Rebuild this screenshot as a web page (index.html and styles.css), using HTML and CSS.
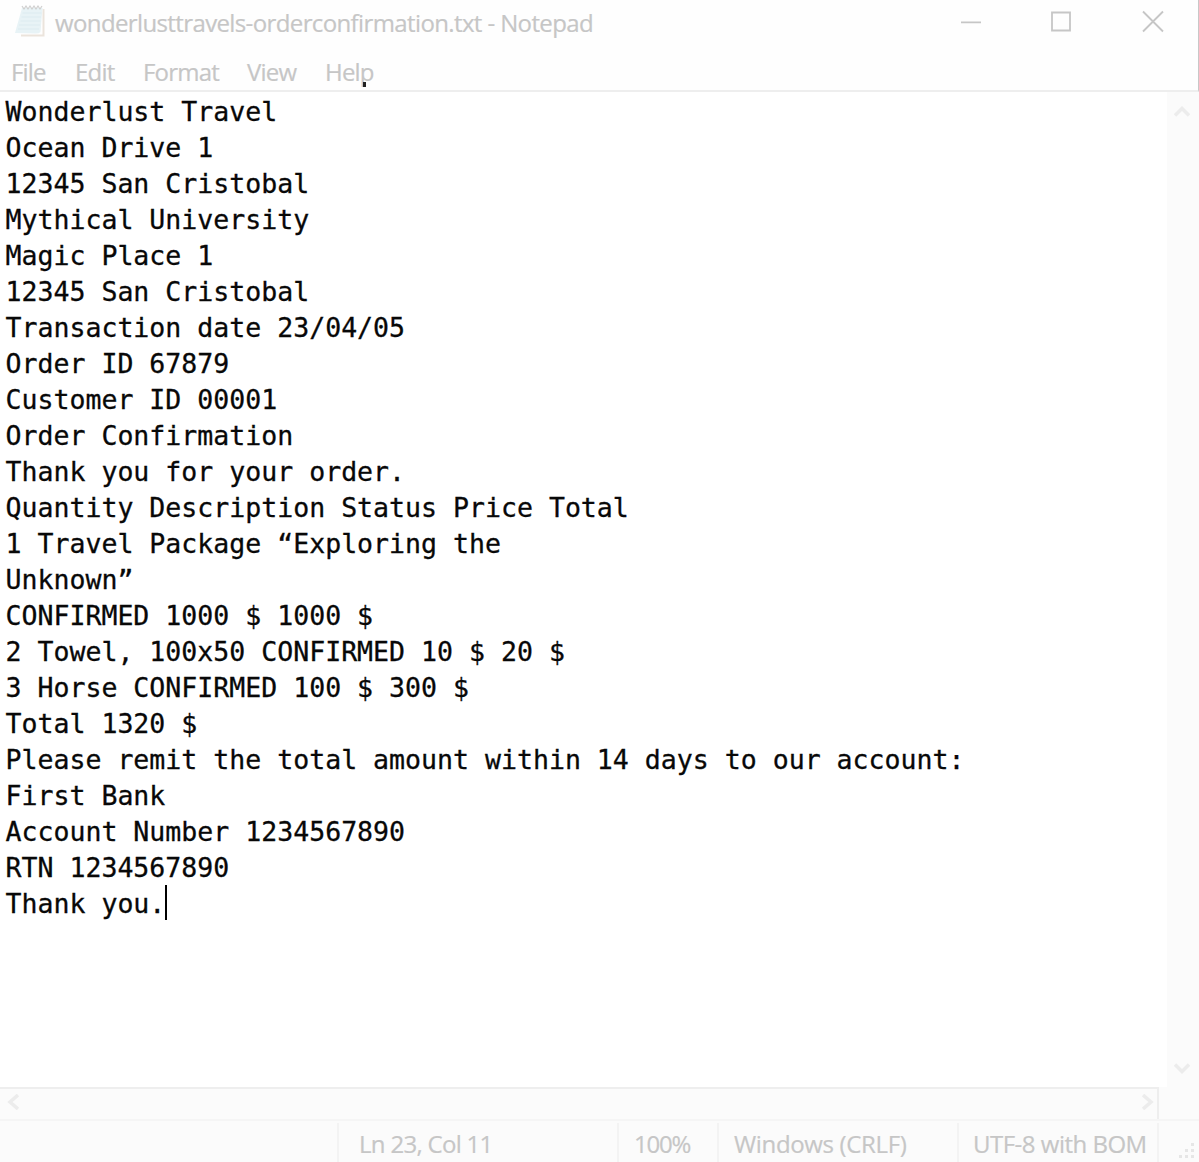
FILE: index.html
```
<!DOCTYPE html>
<html lang="en">
<head>
<meta charset="utf-8">
<title>wonderlusttravels-orderconfirmation.txt - Notepad</title>
<link rel="stylesheet" href="styles.css">
</head>
<body>
<div class="window">
  <header class="top">
    <div class="titlebar">
      <svg class="app-icon" width="34" height="36" viewBox="0 0 34 36">
        <path d="M7 33.500h22.500V7" fill="none" stroke="#ebe4dc" stroke-width="2"/>
        <path d="M8 6 28.500 6 26.500 30Q25 31.500 22 31.500L1 31Z" fill="#e8f3f6"/>
        <path d="M8.500 11h19M7.500 15h19.500M6.500 19h20M5 23h21M4 27h21" stroke="#dcebf0" stroke-width="1"/>
        <path d="M8 4l2 3 2-3 2 3 2-3 2 3 2-3 2 3 2-3 2 3 2-3" fill="none" stroke="#cfcfcf" stroke-width="1.200"/>
      </svg>
      <span class="title">wonderlusttravels-orderconfirmation.txt - Notepad</span>
      <svg class="controls" width="204" height="24" viewBox="0 0 204 24" fill="none" stroke="#c6c6c6" stroke-width="1.800">
        <path d="M1 12.300h20M92 2.500h18v18H92zM183 1.500l20 20M203 1.500l-20 20"/>
      </svg>
    </div>
    <nav class="menu">
      <span class="m-file">File</span><span class="m-edit">Edit</span><span class="m-format">Format</span><span class="m-view">View</span><span class="m-help">Help</span>
    </nav>
    <i class="pointer"></i>
  </header>
  <main class="middle">
    <pre class="editor">Wonderlust Travel
Ocean Drive 1
12345 San Cristobal
Mythical University
Magic Place 1
12345 San Cristobal
Transaction date 23/04/05
Order ID 67879
Customer ID 00001
Order Confirmation
Thank you for your order.
Quantity Description Status Price Total
1 Travel Package “Exploring the
Unknown”
CONFIRMED 1000 $ 1000 $
2 Towel, 100x50 CONFIRMED 10 $ 20 $
3 Horse CONFIRMED 100 $ 300 $
Total 1320 $
Please remit the total amount within 14 days to our account:
First Bank
Account Number 1234567890
RTN 1234567890
Thank you.<i class="caret"></i></pre>
    <div class="vscroll">
      <svg width="16" height="12" viewBox="0 0 16 12"><path d="M1 10.500 8 3.500l7 7" fill="none" stroke="#ececec" stroke-width="3.500"/></svg>
      <svg width="16" height="12" viewBox="0 0 16 12"><path d="M1 1.500 8 8.500l7-7" fill="none" stroke="#ececec" stroke-width="3.500"/></svg>
    </div>
  </main>
  <div class="hscroll">
    <div class="track">
      <svg width="12" height="16" viewBox="0 0 12 16"><path d="M11 1 3 8l8 7" fill="none" stroke="#ececec" stroke-width="3.500"/></svg>
      <svg width="12" height="16" viewBox="0 0 12 16"><path d="M1 1 9 8l-8 7" fill="none" stroke="#ececec" stroke-width="3.500"/></svg>
    </div>
  </div>
  <footer class="status">
    <div class="cell blank"></div>
    <div class="cell position"><span>Ln 23, Col 11</span></div>
    <div class="cell zoom"><span>100%</span></div>
    <div class="cell ending"><span>Windows (CRLF)</span></div>
    <div class="cell encoding"><span>UTF-8 with BOM</span></div>
    <svg class="grip" width="18" height="18" viewBox="0 0 18 18" fill="#e6e6e6"><path d="M13 1h3v3h-3zM7 7h3v3H7zM13 7h3v3h-3zM1 13h3v3H1zM7 13h3v3H7zM13 13h3v3h-3z"/></svg>
  </footer>
</div>
</body>
</html>
```
FILE: styles.css
```
* { box-sizing: border-box; }
body { margin: 0; background: #fefefe; }
.window {
  width: 1199px;
  height: 1162px;
  display: flex;
  flex-direction: column;
  overflow: hidden;
  font-family: "Open Sans", "Noto Sans", sans-serif;
  font-size: 24px;
  color: #c6c6c6;
  -webkit-text-stroke: 0.2px;
  white-space: nowrap;
}
.top {
  position: relative;
  height: 92px;
  border-right: 1px solid #c8c8c8;
  border-bottom: 2px solid #eee;
}
.titlebar { display: flex; height: 46px; align-items: flex-start; padding: 2px 34px 0 14px; }
.title { line-height: 42px; margin-left: 7px; letter-spacing: -0.62px; }
.controls { margin: 8px 0 0 auto; }
.menu { display: flex; line-height: 44px; height: 44px; padding: 4px 0 0 11px; }
.menu span { letter-spacing: -0.8px; }
.m-file { width: 64px; }
.m-edit { width: 68px; }
.m-format { width: 104px; }
.m-view { width: 78px; }
.pointer { position: absolute; left: 363px; top: 82px; width: 3px; height: 5px; background: #222; }
.middle { display: flex; height: 995px; }
.editor {
  flex: 1;
  margin: 0;
  padding: 2px 0 0 5.5px;
  background: #fff;
  color: #080808;
  font: 26.55px/36px "DejaVu Sans Mono", monospace;
  -webkit-text-stroke: 0.3px;
}
.caret { display: inline-block; width: 2px; height: 35px; background: #000; vertical-align: 3px; margin: -10px 0; }
.vscroll {
  width: 32px;
  display: flex;
  flex-direction: column;
  justify-content: space-between;
  padding: 13px 0 12px 7px;
  background: #fbfbfb;
}
.hscroll { height: 34px; background: #fbfbfb; border-bottom: 2px solid #f5f5f5; }
.track {
  width: 1159px;
  height: 32px;
  display: flex;
  justify-content: space-between;
  padding: 5px 3px 0 7px;
  border-top: 2px solid #eee;
  border-right: 2px solid #eee;
}
.status { display: flex; height: 41px; padding-top: 2px; background: #fbfbfb; line-height: 42px; }
.cell { border-right: 2px solid #f3f3f3; }
.blank { width: 339px; }
.position { width: 280px; padding-left: 20px; }
.zoom { width: 100px; padding-left: 15px; }
.ending { width: 240px; padding-left: 15px; }
.encoding { width: 200px; padding-left: 14px; }
.cell span { letter-spacing: -0.5px; }
.position span { letter-spacing: -0.7px; }
.zoom span { letter-spacing: -1.2px; }
.ending span { letter-spacing: -0.35px; }
.grip { margin: 19px 0 0 19px; }
```
